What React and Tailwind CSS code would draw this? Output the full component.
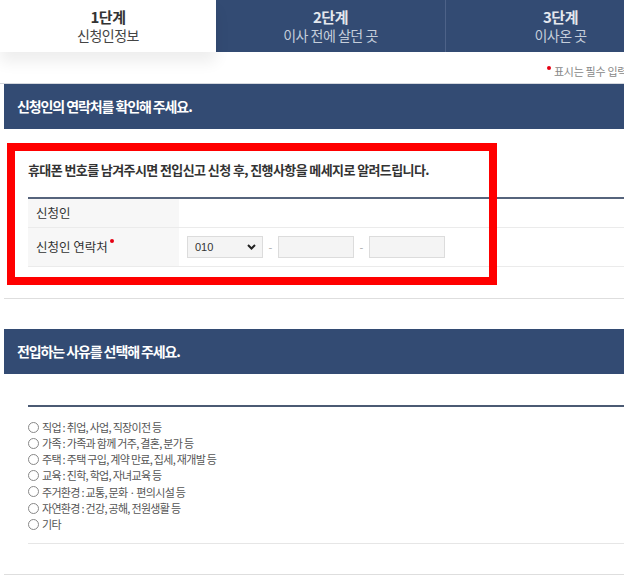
import React from 'react';

const FONT = { fontFamily: '"Noto Sans CJK KR", "Noto Sans", sans-serif' };

const steps = [
    { no: '1단계', title: '신청인정보', active: true, width: 'w-[216px]' },
    { no: '2단계', title: '이사 전에 살던 곳', active: false, width: 'w-[229px]' },
    { no: '3단계', title: '이사온 곳', active: false, width: 'w-[230px]' },
];

const reasons = [
    '직업 : 취업, 사업, 직장이전 등',
    '가족 : 가족과 함께 거주, 결혼, 분가 등',
    '주택 : 주택 구입, 계약 만료, 집세, 재개발 등',
    '교육 : 진학, 학업, 자녀교육 등',
    '주거환경 : 교통, 문화 · 편의시설 등',
    '자연환경 : 건강, 공해, 전원생활 등',
    '기타',
];

const RequiredDot = ({ className }) => (
    <span className={`inline-block w-[4px] h-[4px] rounded-full bg-[#e60012] ${className}`}></span>
);

const StepTabs = () => (
    <div className="flex h-[52px]">
        {steps.map((s, i) => (
            <div
                key={s.no}
                className={
                    s.active
                        ? `${s.width} shrink-0 relative z-10 bg-white flex flex-col items-center justify-center shadow-[0_10px_14px_rgba(0,0,0,0.07)]`
                        : `${s.width} shrink-0 bg-[#334b73] flex flex-col items-center justify-center ${i === 2 ? 'border-l border-[#4d6288]' : ''}`
                }
            >
                <span className={`text-[15px] font-bold leading-[19px] tracking-[-0.5px] ${s.active ? 'text-[#333]' : 'text-[#e4e8ee]'}`}>{s.no}</span>
                <span className={`text-[14px] leading-[19px] tracking-[-0.5px] ${s.active ? 'text-[#444]' : 'text-[#c5cedb]'}`}>{s.title}</span>
            </div>
        ))}
    </div>
);

const SectionHeader = ({ children }) => (
    <div className="ml-[4px] h-[45px] bg-[#334b73] flex items-center pl-[13px]">
        <h2 className="text-white text-[14px] font-bold tracking-[-1.1px]">{children}</h2>
    </div>
);

const ContactSection = () => (
    <div className="relative pl-[28px] pt-[33px]">
        <p className="text-[13px] leading-4 font-bold text-[#333] tracking-[-0.6px]">
            휴대폰 번호를 남겨주시면 전입신고 신청 후, 진행사항을 메세지로 알려드립니다.
        </p>
        <div className="mt-[19px] border-t-2 border-[#56647c]">
            <div className="flex h-[29px] border-b border-[#ebebeb]">
                <div className="w-[151px] bg-[#f7f7f7] flex items-center pl-[8px] text-[12.5px] text-[#333]">신청인</div>
                <div className="flex-1"></div>
            </div>
            <div className="flex h-[39px] border-b border-[#ebebeb]">
                <div className="w-[151px] bg-[#f7f7f7] flex items-center pl-[8px] text-[12.5px] text-[#333]">
                    신청인 연락처
                    <RequiredDot className="self-start mt-[11px] ml-[2px]" />
                </div>
                <div className="flex-1 flex items-center pl-[8px]">
                    <div className="w-[76px] h-[22px] bg-[#f4f4f4] border border-[#dcdcdc] flex items-center justify-between pl-[7px] pr-[6px]">
                        <span className="text-[11px] text-[#333]" style={{ fontFamily: '"Liberation Sans", sans-serif' }}>010</span>
                        <svg width="9" height="6" viewBox="0 0 9 6"><path d="M1 1l3.5 3.5L8 1" stroke="#222" strokeWidth="2" fill="none" /></svg>
                    </div>
                    <span className="w-[15px] text-center text-[11px] text-[#aaa]">-</span>
                    <div className="w-[76px] h-[22px] bg-[#f4f4f4] border border-[#dcdcdc]"></div>
                    <span className="w-[15px] text-center text-[11px] text-[#aaa]">-</span>
                    <div className="w-[76px] h-[22px] bg-[#f4f4f4] border border-[#dcdcdc]"></div>
                </div>
            </div>
        </div>
        <div className="absolute top-[14px] left-[7px] w-[490px] h-[142px] border-8 border-[#ff0000]"></div>
    </div>
);

const ReasonSection = () => (
    <div className="pl-[28px] pt-[31px]">
        <div className="border-t-2 border-[#4b5a73]"></div>
        <ul className="pt-[12px]">
            {reasons.map((r) => (
                <li key={r} className="h-[16.2px] flex items-center gap-[3px]">
                    <span className="w-[11px] h-[11px] rounded-full border border-[#888] bg-white shrink-0"></span>
                    <span className="text-[11px] text-[#555] tracking-[-0.7px]">{r}</span>
                </li>
            ))}
        </ul>
        <div className="mt-[11px] border-t border-[#e6e6e6]"></div>
    </div>
);

export default function App() {
    return (
        <div className="w-[624px] h-[580px] overflow-hidden bg-white" style={FONT}>
            <div className="w-[700px]">
                <StepTabs />
                <div className="h-[31px] flex items-end pb-[4px] pl-[547px]">
                    <RequiredDot className="self-start mt-[14px] mr-[3px]" />
                    <span className="text-[11px] text-[#888] whitespace-nowrap tracking-[-0.3px]">표시는 필수 입력 항목입니다.</span>
                </div>
                <div className="border-t border-[#d5d8de]"></div>
                <SectionHeader>신청인의 연락처를 확인해 주세요.</SectionHeader>
                <ContactSection />
                <div className="mt-[31px] ml-[4px] border-t border-[#dedede]"></div>
                <div className="mt-[30px]">
                    <SectionHeader>전입하는 사유를 선택해 주세요.</SectionHeader>
                </div>
                <ReasonSection />
                <div className="mt-[30px] ml-[4px] border-t border-[#dedede]"></div>
            </div>
        </div>
    );
}
